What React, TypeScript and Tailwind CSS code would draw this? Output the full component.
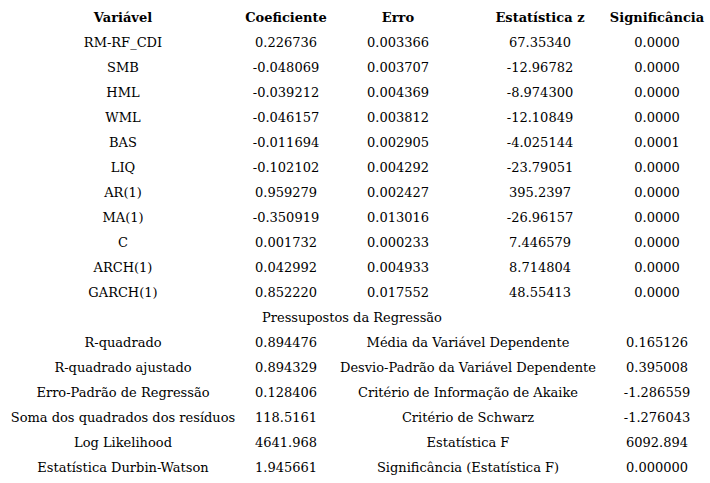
const coefs: [string, string, string, string, string][] = [
  ['RM-RF_CDI', '0.226736', '0.003366', '67.35340', '0.0000'],
  ['SMB', '-0.048069', '0.003707', '-12.96782', '0.0000'],
  ['HML', '-0.039212', '0.004369', '-8.974300', '0.0000'],
  ['WML', '-0.046157', '0.003812', '-12.10849', '0.0000'],
  ['BAS', '-0.011694', '0.002905', '-4.025144', '0.0001'],
  ['LIQ', '-0.102102', '0.004292', '-23.79051', '0.0000'],
  ['AR(1)', '0.959279', '0.002427', '395.2397', '0.0000'],
  ['MA(1)', '-0.350919', '0.013016', '-26.96157', '0.0000'],
  ['C', '0.001732', '0.000233', '7.446579', '0.0000'],
  ['ARCH(1)', '0.042992', '0.004933', '8.714804', '0.0000'],
  ['GARCH(1)', '0.852220', '0.017552', '48.55413', '0.0000'],
];

const stats: [string, string, string, string][] = [
  ['R-quadrado', '0.894476', 'Média da Variável Dependente', '0.165126'],
  ['R-quadrado ajustado', '0.894329', 'Desvio-Padrão da Variável Dependente', '0.395008'],
  ['Erro-Padrão de Regressão', '0.128406', 'Critério de Informação de Akaike', '-1.286559'],
  ['Soma dos quadrados dos resíduos', '118.5161', 'Critério de Schwarz', '-1.276043'],
  ['Log Likelihood', '4641.968', 'Estatística F', '6092.894'],
  ['Estatística Durbin-Watson', '1.945661', 'Significância (Estatística F)', '0.000000'],
];

const cell = 'h-[25px] flex items-center justify-center whitespace-nowrap';

export default function App() {
  return (
    <div className="w-[710px] h-[483px] bg-white text-black font-['DejaVu_Serif',serif] text-[13px] pt-[5px]">
      <div className="grid grid-cols-[246px_80px_144px_140px_94px]">
        {['Variável', 'Coeficiente', 'Erro', 'Estatística z', 'Significância'].map((h) => (
          <div key={h} className={`${cell} font-bold`}>{h}</div>
        ))}
        {coefs.map((r) =>
          r.map((v, i) => (
            <div key={r[0] + i} className={cell}>{v}</div>
          ))
        )}
        <div className={`${cell} col-span-5`}>Pressupostos da Regressão</div>
        {stats.map((r) => (
          <div key={r[0]} className="contents">
            <div className={cell}>{r[0]}</div>
            <div className={cell}>{r[1]}</div>
            <div className={`${cell} col-span-2`}>{r[2]}</div>
            <div className={cell}>{r[3]}</div>
          </div>
        ))}
      </div>
    </div>
  );
}
